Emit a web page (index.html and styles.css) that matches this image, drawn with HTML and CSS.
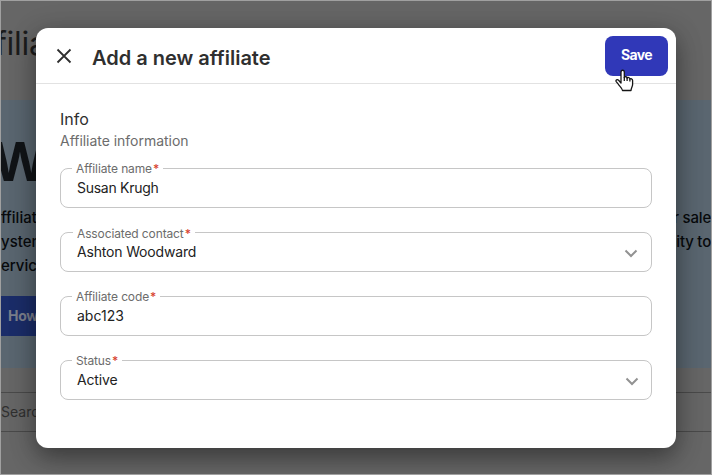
FILE: index.html
```html
<!DOCTYPE html>
<html lang="en">
<head>
<meta charset="utf-8">
<title>Add a new affiliate</title>
<link rel="stylesheet" href="styles.css">
</head>
<body>
<div class="screen">
  <div class="page">
    <header class="page-head"><span class="page-title">filia</span></header>
    <section class="hero">
      <div class="hero-title">W</div>
      <div class="hero-copy">
        <div class="line"><span>ffiliat</span><span class="tail">r sale</span></div>
        <div class="line"><span>ysten</span><span class="tail">nity to</span></div>
        <div class="line"><span>ervic</span></div>
      </div>
      <div class="hero-btn">How</div>
    </section>
    <div class="search">Searc</div>
  </div>

  <div class="modal">
    <header class="modal-head">
      <svg class="close" viewBox="0 0 16 16"><path d="M1.5 1.5 14.5 14.5M14.5 1.5 1.5 14.5"/></svg>
      <h1>Add a new affiliate</h1>
      <button class="save">Save</button>
    </header>
    <main class="modal-body">
      <h2>Info</h2>
      <p class="sub">Affiliate information</p>
      <div class="fields">
        <div class="field"><label>Affiliate name<b>*</b></label><span class="value v-name">Susan Krugh</span></div>
        <div class="field"><label class="l-contact">Associated contact<b>*</b></label><span class="value v-contact">Ashton Woodward</span><svg class="chevron" viewBox="0 0 14 9"><path d="M1.5 1.5 7 7 12.5 1.5"/></svg></div>
        <div class="field"><label>Affiliate code<b>*</b></label><span class="value v-code">abc123</span></div>
        <div class="field"><label>Status<b>*</b></label><span class="value v-status">Active</span><svg class="chevron chevron-status" viewBox="0 0 14 9"><path d="M1.5 1.5 7 7 12.5 1.5"/></svg></div>
      </div>
    </main>
  </div>
  <svg class="cursor" viewBox="0 0 19 23"><path d="M6 14V3.2C6 .6 9.3.6 9.3 3.2V8.5C9.8 7.3 12 7.5 12.1 9.1 12.8 8 14.8 8.4 14.9 10 15.8 9.2 17.6 9.8 17.6 11.5V15.5C17.6 17.5 16.2 18.4 16 21.5H7.5C7 18.7 4.5 17.3 3.3 15.2L1.2 12.6C.3 10.9 2.3 10 3.6 11.3Z"/><path d="M9.3 8V12M12.1 9V12M14.9 10V12.5"/></svg>
</div>
</body>
</html>
```
FILE: styles.css
```css
* { box-sizing: border-box; }
body {
  margin: 0;
  font-family: Inter, "Liberation Sans", sans-serif;
  color: #2f2f2f;
}
.screen {
  position: relative;
  width: 712px;
  height: 475px;
  overflow: hidden;
  border: 1px solid #a0a0a0;
  background: #666;
}
.page { color: #080a0c; }
.page-head { height: 99px; padding-top: 23px; overflow: hidden; }
.page-title {
  display: block;
  margin-left: -6px;
  font-size: 32px;
  line-height: 40px;
  color: #1c1c1c;
  letter-spacing: -.3px;
}
.hero { height: 268px; background: #5a6670; overflow: hidden; }
.hero-title {
  height: 106px;
  padding-top: 31px;
  margin-left: -9px;
  font-size: 54px;
  line-height: 62px;
  font-weight: 700;
  color: #111417;
}
.hero-copy { height: 90px; font-size: 15px; line-height: 24px; font-weight: 500; }
.line { display: flex; justify-content: space-between; white-space: nowrap; }
.tail { width: 39px; text-align: right; display: flex; justify-content: flex-end; letter-spacing: -.2px; }
.hero-btn {
  width: 110px;
  height: 40px;
  padding-left: 7px;
  background: #1b2d69;
  color: #7b7f8c;
  font-size: 14px;
  line-height: 39px;
  font-weight: 700;
  letter-spacing: -.3px;
}
.search {
  height: 40px;
  margin-top: 24px;
  border: solid #4a4a4a;
  border-width: 1px 0;
  color: #303030;
  font-size: 14px;
  line-height: 38px;
}
.modal {
  position: absolute;
  left: 35px;
  top: 27px;
  width: 640px;
  height: 420px;
  border-radius: 12px;
  background: #fff;
  box-shadow: 0 10px 24px rgba(0, 0, 0, .35), 0 4px 30px rgba(0, 0, 0, .15);
}
.modal-head {
  display: flex;
  align-items: center;
  height: 56px;
  padding: 0 8px 0 20px;
  border-bottom: 1px solid #e2e2e2;
}
.close { width: 16px; height: 16px; fill: none; stroke: #2f2f2f; stroke-width: 1.8; }
h1 {
  flex: 1;
  margin: 4px 0 0 20px;
  font-size: 20px;
  line-height: 28px;
  font-weight: 600;
  white-space: nowrap;
}
.save {
  width: 63px;
  height: 40px;
  padding: 0 0 2px;
  border: 0;
  border-radius: 8px;
  background: #3038b8;
  color: #fff;
  font: 700 14px/38px Inter, "Liberation Sans", sans-serif;
  letter-spacing: -.6px;
}
.modal-body { padding: 23px 24px 24px; }
h2 { margin: 0; font-size: 16px; line-height: 24px; font-weight: 400; }
.sub { margin: 0; color: #6c6c6c; font-size: 14px; line-height: 20px; letter-spacing: -.03px; }
.fields { display: grid; gap: 24px; margin-top: 17px; }
.field {
  position: relative;
  display: flex;
  align-items: center;
  justify-content: space-between;
  height: 40px;
  padding: 0 13px 0 16px;
  border: 1px solid #c6c6c6;
  border-radius: 8px;
}
label {
  position: absolute;
  left: 11px;
  top: -8px;
  padding: 0 4px;
  background: #fff;
  color: #6c6c6c;
  font-size: 12px;
  line-height: 16px;
  letter-spacing: -.12px;
  white-space: nowrap;
}
.l-contact { left: 12px; top: -7px; }
label b { margin-left: 1px; color: #d8432f; font-weight: 500; letter-spacing: 0; }
.value { color: #222; font-size: 14px; line-height: 20px; white-space: nowrap; }
.v-name { letter-spacing: -.27px; }
.v-contact { letter-spacing: -.17px; }
.v-status { letter-spacing: -.15px; }
.chevron { width: 14px; height: 9px; margin-top: 3px; fill: none; stroke: #929292; stroke-width: 2; }
.chevron-status { margin: 2px -1px 0 0; }
.cursor {
  position: absolute;
  left: 614px;
  top: 68px;
  width: 19px;
  height: 23px;
  fill: #fff;
  stroke: #151515;
  stroke-width: 1.3;
  stroke-linejoin: round;
}
```
